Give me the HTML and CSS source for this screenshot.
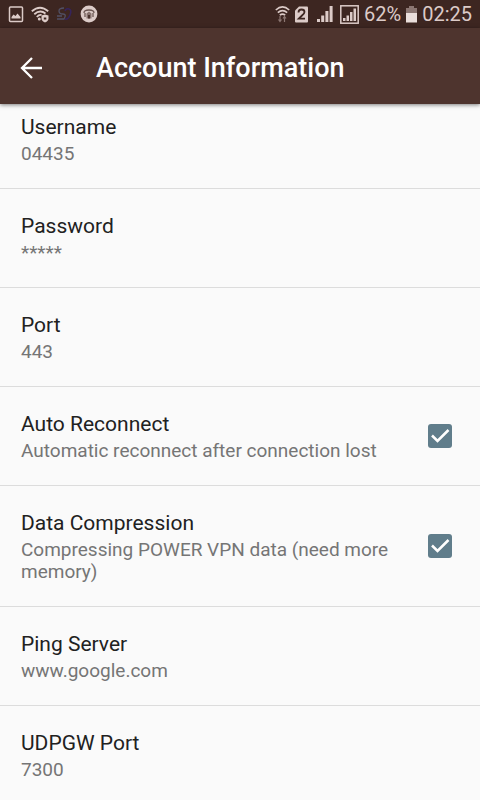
FILE: index.html
```html
<!DOCTYPE html>
<html lang="en">
<head>
<meta charset="utf-8">
<meta name="viewport" content="width=device-width, initial-scale=1">
<title>Account Information</title>
<link rel="stylesheet" href="styles.css">
</head>
<body>
<div class="status">
  <div class="status-left">
    <svg width="16" height="17" viewBox="0 0 16 17"><rect x="1.500" y="1" width="13" height="14.500" rx="1" fill="none" stroke="#dccbc8" stroke-width="1.500"/><path d="M3.500 12.500V11l2-2.500 2 1.500L9.500 7.500 12.500 11v1.500z" fill="#dccbc8"/></svg>
    <svg width="18" height="17" viewBox="0 0 18 17"><g fill="none" stroke="#dccbc8" stroke-width="1.800"><path d="M.8 5.300Q9-1.800 17.200 5.300"/><path d="M3.300 8.200Q9 3.200 14.500 7.500"/><path d="M5.800 11Q8 8.500 10.500 9"/></g><circle cx="8.300" cy="13" r="1.500" fill="#dccbc8"/><path d="M10.500 9.500l3.500-1 3.500 1v3q0 2.500-3.500 4-3.500-1.500-3.500-4z" fill="#dccbc8"/><path d="M12.800 11.500h2.500v2h-2.500z" fill="#3d2621"/></svg>
    <svg width="17" height="16" viewBox="0 0 17 16" fill="none"><path d="M8 2Q3 2 3 5t4 3 1 5H1M1 10h5" stroke="#515064" stroke-width="1.300"/><path d="M9 5q1-3 4-2t1 6-5 4" stroke="#36245c" stroke-width="1.600"/></svg>
    <svg width="18" height="18" viewBox="0 0 18 18"><circle cx="9" cy="9" r="8.400" fill="#dccbc8"/><path d="M4 8q0-3 5-3t5 3M5 8v4M13 8v4" fill="none" stroke="#6b5652" stroke-width="1.300"/><path d="M6.500 8.500L9 6.500l2.500 2v5h-5z" fill="#88736f"/><path d="M8 10h2v3.500H8z" fill="#4a332e"/></svg>
  </div>
  <div class="status-right">
    <svg width="15" height="18" viewBox="0 0 15 18"><g fill="none" stroke="#dccbc8" stroke-width="1.600"><path d="M.8 5Q7.500-1.200 14.200 5"/><path d="M2.800 7.700Q7.500 3.500 12.200 7.700"/><path d="M4.800 10.200Q7.500 8 10.200 10.200"/></g><path d="M5 11v5M3.500 14.500L5 16.500l1.500-2M9.500 17v-5M8 13.500l1.500-2 1.500 2" fill="none" stroke="#8b7672" stroke-width="1.200"/></svg>
    <svg width="13" height="17" viewBox="0 0 13 17"><path d="M4 .5h8q1 0 1 1v14q0 1-1 1H1q-1 0-1-1V4.500z" fill="#dccbc8"/><path d="M3.500 6.500q0-3 3-3t3 2.500q0 1.500-2.500 3.500L3.800 12.700H10" fill="none" stroke="#3d2621" stroke-width="1.800"/></svg>
    <svg class="signal" width="16" height="16" viewBox="0 0 16 16"><path d="M0 13h3v3H0zM4.200 9.500h3V16h-3zM8.400 5h3v11h-3zM12.600 0h3v16h-3z" fill="#dccbc8"/></svg>
    <svg width="19" height="19" viewBox="0 0 19 19"><rect x=".8" y=".8" width="17.400" height="17.400" fill="none" stroke="#dccbc8" stroke-width="1.500"/><path d="M3 13h2.500v3H3zM6.500 10.500H9V16H6.500zM10 7h2.500v9H10zM13.500 3.500H16V16h-2.500z" fill="#dccbc8"/></svg>
    <span>62%</span>
    <svg width="11" height="17" viewBox="0 0 11 17"><path d="M3 0h5v2h3v5H0V2h3z" fill="#8b7672"/><path d="M0 7h11v9.500H0z" fill="#eadedb"/></svg>
    <time class="clock">02:25</time>
  </div>
</div>
<header class="bar">
  <button class="back" type="button" aria-label="Back"><svg width="22" height="22" viewBox="0 0 22 22" fill="none" stroke="#fff" stroke-width="2.300"><path d="M22 11H2.500M12 1L2 11l10 10"/></svg></button>
  <h1>Account Information</h1>
</header>
<main class="list">
  <section class="row row-first"><div><h2>Username</h2><p>04435</p></div></section>
  <section class="row"><div><h2>Password</h2><p>*****</p></div></section>
  <section class="row"><div><h2>Port</h2><p>443</p></div></section>
  <label class="row">
    <span class="text"><span class="title">Auto Reconnect</span><span class="summary">Automatic reconnect after connection lost</span></span>
    <span class="check"><input type="checkbox" checked><svg viewBox="0 0 24 24" width="24" height="24"><path d="M4 11.500l5.500 5.500L20.500 6" fill="none" stroke="#fff" stroke-width="2.500"/></svg></span>
  </label>
  <label class="row">
    <span class="text"><span class="title">Data Compression</span><span class="summary">Compressing POWER VPN data (need more memory)</span></span>
    <span class="check"><input type="checkbox" checked><svg viewBox="0 0 24 24" width="24" height="24"><path d="M4 11.500l5.500 5.500L20.500 6" fill="none" stroke="#fff" stroke-width="2.500"/></svg></span>
  </label>
  <section class="row"><div><h2>Ping Server</h2><p>www.google.com</p></div></section>
  <section class="row"><div><h2>UDPGW Port</h2><p>7300</p></div></section>
</main>
</body>
</html>
```
FILE: styles.css
```css
* { box-sizing: border-box; }
html, body { height: 100%; }
body {
  margin: 0;
  display: flex;
  flex-direction: column;
  overflow: hidden;
  background: #fafafa;
  color: #212121;
  font-family: Roboto, "Liberation Sans", sans-serif;
}
svg { display: block; flex: none; }
h1, h2, p { margin: 0; font-weight: 400; }

.status {
  flex: none;
  display: flex;
  justify-content: space-between;
  align-items: center;
  height: 28px;
  padding: 0 8px;
  background: #3d2621;
  color: #dccbc8;
  font-size: 20px;
  line-height: 28px;
}
.status-left, .status-right { display: flex; align-items: center; }
.status-left { gap: 7px; }
.status-right { gap: 5px; }
.signal { margin-left: 4px; margin-right: 2px; }

.bar {
  flex: none;
  display: flex;
  align-items: center;
  height: 76px;
  padding: 3px 20px 0;
  gap: 54px;
  background: #4e342e;
  color: #fff;
  box-shadow: 0 1px 4px rgba(0, 0, 0, 0.5);
  position: relative;
}
.back { padding: 0; border: 0; background: none; }
.bar h1 { font-size: 27px; line-height: 32px; font-weight: 500; }

.list { flex: 1; min-height: 0; overflow: hidden; }
.row {
  display: flex;
  align-items: center;
  gap: 28px;
  padding: 23px 28px 23px 21px;
  border-bottom: 1px solid #dcdcdc;
}
.row-first { padding-top: 9px; }
.text { flex: 1; }
.row h2, .title { display: block; font-size: 21px; line-height: 28px; }
.row p, .summary {
  display: block;
  margin-top: 2px;
  font-size: 19px;
  line-height: 22px;
  color: #757575;
}

.check { display: grid; flex: none; }
.check > * { grid-area: 1 / 1; }
.check input {
  appearance: none;
  width: 24px;
  height: 24px;
  margin: 0;
  border-radius: 3px;
  background: #607d8b;
}
.check svg { pointer-events: none; z-index: 1; }
.check input:not(:checked) + svg { visibility: hidden; }
```
